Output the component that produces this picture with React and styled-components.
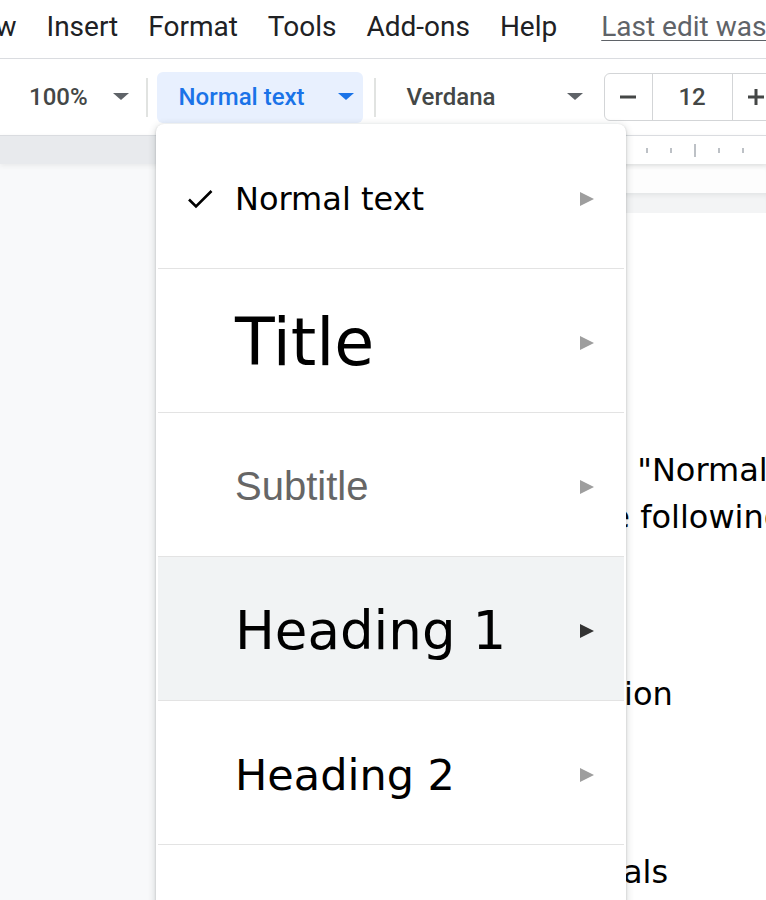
import styled, { createGlobalStyle } from 'styled-components'

const GlobalStyle = createGlobalStyle`
  * {
    box-sizing: border-box;
  }
  html,
  body {
    margin: 0;
    padding: 0;
    background: #fff;
  }
  body {
    font-family: Roboto, 'Liberation Sans', sans-serif;
  }
`

const Screen = styled.div`
  position: relative;
  width: 766px;
  height: 900px;
  overflow: hidden;
  display: flex;
  flex-direction: column;
  background: #f8f9fa;
`

const MenuBar = styled.div`
  flex: 0 0 59px;
  display: flex;
  align-items: center;
  padding-bottom: 6px;
  background: #fff;
  border-bottom: 1px solid #dadce0;
  margin-left: -59px;
`

const MenuItem = styled.span`
  flex: none;
  padding: 0 15px;
  font-size: 28px;
  color: #202124;
  white-space: nowrap;
`

const LastEdit = styled.span`
  flex: none;
  margin-left: 29px;
  font-size: 28px;
  color: #5f6368;
  white-space: nowrap;
  text-decoration: underline;
  text-underline-offset: 4px;
  text-decoration-thickness: 1px;
`

const Toolbar = styled.div`
  flex: 0 0 76px;
  display: flex;
  align-items: center;
  padding-left: 29px;
  background: #fff;
  font-size: 24px;
  font-weight: 500;
  color: #444746;
  white-space: nowrap;
`

const ZoomPicker = styled.div`
  flex: none;
  display: flex;
  align-items: center;
  gap: 25px;
`

const Separator = styled.div`
  flex: none;
  width: 2px;
  height: 39px;
  margin: 0 ${(p) => p.$right}px 0 ${(p) => p.$left}px;
  background: #e1e3e1;
`

const StyleButton = styled.div`
  flex: none;
  width: 206px;
  height: 51px;
  display: flex;
  align-items: center;
  justify-content: space-between;
  padding: 0 9px 0 22px;
  border-radius: 6px;
  background: #e8f0fe;
  color: #1a73e8;
`

const FontPicker = styled.div`
  flex: none;
  width: 208px;
  display: flex;
  align-items: center;
  justify-content: space-between;
  padding: 0 10px 0 22px;
`

const SizeBox = styled.div`
  flex: none;
  margin-left: 11px;
  height: 48px;
  display: flex;
  border: 1px solid #d3d5d7;
  border-radius: 6px;
`

const SizeCell = styled.div`
  width: ${(p) => p.$w}px;
  display: flex;
  align-items: center;
  justify-content: center;
  border-left: ${(p) => (p.$first ? 'none' : '1px solid #d3d5d7')};
  color: #444746;
`

const Ruler = styled.div`
  position: relative;
  z-index: 1;
  flex: 0 0 29px;
  display: flex;
  border-top: 1px solid #dadce0;
  box-shadow: 0 2px 5px rgba(60, 64, 67, 0.08);
`

const RulerMargin = styled.div`
  flex: 0 0 200px;
  background: #e8eaed;
`

const RulerTrack = styled.div`
  flex: 1;
  min-width: 0;
  display: flex;
  align-items: center;
  padding-left: 14px;
  background: #fff;
  overflow: hidden;
`

const TickSlot = styled.div`
  flex: 0 0 24px;
  display: flex;
  align-items: center;
`

const Tick = styled.div`
  width: 2px;
  height: ${(p) => (p.$major ? 13 : 5)}px;
  background: #bdc1c6;
`

const Workspace = styled.div`
  flex: 1;
  display: flex;
  min-height: 0;
`

const Canvas = styled.div`
  flex: 0 0 200px;
  background: #f8f9fa;
`

const PageColumn = styled.div`
  flex: 1;
  min-width: 0;
  display: flex;
  flex-direction: column;
  background: #fff;
  overflow: hidden;
`

const Strip = styled.div`
  flex: 0 0 ${(p) => p.$h}px;
  background: ${(p) => p.$bg};
  box-shadow: inset 0 5px 5px -3px rgba(60, 64, 67, 0.09);
`

const Page = styled.div`
  flex: 1;
  padding: 234px 0 0 40px;
  background: #fff;
  font-family: 'DejaVu Sans', Verdana, sans-serif;
  font-size: 32px;
  line-height: 47px;
  color: #000;
`

const Line = styled.div`
  display: flex;
  margin-top: ${(p) => p.$gap || 0}px;
  white-space: nowrap;
`

const Lead = styled.span`
  flex: 0 0 ${(p) => p.$w}px;
  text-align: right;
  overflow: hidden;
`

const Rest = styled.span`
  flex: none;
  padding-left: ${(p) => p.$pad || 0}px;
  white-space: pre;
`

const StyleMenu = styled.div`
  position: absolute;
  top: 124px;
  left: 156px;
  z-index: 5;
  width: 470px;
  height: 820px;
  padding: 1px 2px 0;
  background: #fff;
  border-radius: 8px;
  box-shadow: 0 2px 6px 2px rgba(60, 64, 67, 0.15),
    0 1px 2px rgba(60, 64, 67, 0.3);
`

const StyleItem = styled.div`
  height: 144px;
  display: flex;
  align-items: center;
  padding: 4px 30px 0 0;
  border-bottom: 1px solid #e3e3e3;
  background: ${(p) => (p.$active ? '#f1f3f4' : 'transparent')};
`

const CheckSlot = styled.div`
  flex: 0 0 77px;
  display: flex;
  align-items: center;
  padding-left: 29px;
`

const StyleLabel = styled.span`
  flex: 1;
  font-family: ${(p) => p.$font};
  font-size: ${(p) => p.$size}px;
  color: ${(p) => p.$color};
  white-space: nowrap;
`

const Caret = ({ color }) => (
  <svg width='16' height='8' viewBox='0 0 16 8'>
    <polygon points='0,0 16,0 8,7' fill={color} />
  </svg>
)

const SubArrow = ({ color }) => (
  <svg width='14' height='14' viewBox='0 0 14 14'>
    <polygon points='0,0 14,7 0,14' fill={color} />
  </svg>
)

const Check = () => (
  <svg width='26' height='20' viewBox='0 0 26 20'>
    <path d='M2 10.5 L9 17.5 L24.5 2' fill='none' stroke='#000' strokeWidth='2.6' />
  </svg>
)

const Minus = () => (
  <svg width='16' height='16' viewBox='0 0 16 16'>
    <rect x='0' y='6.5' width='16' height='3' fill='#444746' />
  </svg>
)

const Plus = () => (
  <svg width='16' height='16' viewBox='0 0 16 16'>
    <rect x='0' y='6.5' width='16' height='3' fill='#444746' />
    <rect x='6.5' y='0' width='3' height='16' fill='#444746' />
  </svg>
)

const verdana = "'DejaVu Sans', Verdana, sans-serif"
const arial = "'Liberation Sans', Arial, sans-serif"

const styles = [
  { label: 'Normal text', size: 32, font: verdana, color: '#000', checked: true },
  { label: 'Title', size: 65, font: verdana, color: '#000' },
  { label: 'Subtitle', size: 40, font: arial, color: '#666' },
  { label: 'Heading 1', size: 53, font: verdana, color: '#000', active: true },
  { label: 'Heading 2', size: 43, font: verdana, color: '#000' },
  { label: 'Heading 3', size: 37, font: verdana, color: '#434343' },
]

const menus = ['View', 'Insert', 'Format', 'Tools', 'Add-ons', 'Help']

const App = () => {
  return (
    <>
      <GlobalStyle />
      <Screen>
        <MenuBar>
          {menus.map((m) => (
            <MenuItem key={m}>{m}</MenuItem>
          ))}
          <LastEdit>Last edit was seconds ago</LastEdit>
        </MenuBar>

        <Toolbar>
          <ZoomPicker>
            100%
            <Caret color='#5f6368' />
          </ZoomPicker>
          <Separator $left={17} $right={9} />
          <StyleButton>
            Normal text
            <Caret color='#1a73e8' />
          </StyleButton>
          <Separator $left={11} $right={9} />
          <FontPicker>
            Verdana
            <Caret color='#5f6368' />
          </FontPicker>
          <SizeBox>
            <SizeCell $w={47} $first>
              <Minus />
            </SizeCell>
            <SizeCell $w={80}>12</SizeCell>
            <SizeCell $w={48}>
              <Plus />
            </SizeCell>
          </SizeBox>
        </Toolbar>

        <Ruler>
          <RulerMargin />
          <RulerTrack>
            {Array.from({ length: 24 }).map((_, i) => (
              <TickSlot key={i}>
                <Tick $major={i % 4 === 0} />
              </TickSlot>
            ))}
          </RulerTrack>
        </Ruler>

        <Workspace>
          <Canvas />
          <PageColumn>
            <Strip $h={29} $bg='#fdfdfd' />
            <Strip $h={20} $bg='#f3f4f5' />
            <Page>
              <Line>
                <Lead $w={387}>Start with</Lead>
                <Rest> "Normal text"</Rest>
              </Line>
              <Line>
                <Lead $w={390}>and use the</Lead>
                <Rest> following</Rest>
              </Line>
              <Line $gap={130}>
                <Lead $w={376}>Introduct</Lead>
                <Rest $pad={8}>ion</Rest>
              </Line>
              <Line $gap={131}>
                <Lead $w={380}>Go</Lead>
                <Rest $pad={3}>als</Rest>
              </Line>
            </Page>
          </PageColumn>
        </Workspace>

        <StyleMenu>
          {styles.map((s) => (
            <StyleItem key={s.label} $active={s.active}>
              <CheckSlot>{s.checked && <Check />}</CheckSlot>
              <StyleLabel $font={s.font} $size={s.size} $color={s.color}>
                {s.label}
              </StyleLabel>
              <SubArrow color={s.active ? '#333' : '#9e9e9e'} />
            </StyleItem>
          ))}
        </StyleMenu>
      </Screen>
    </>
  )
}

export default App
